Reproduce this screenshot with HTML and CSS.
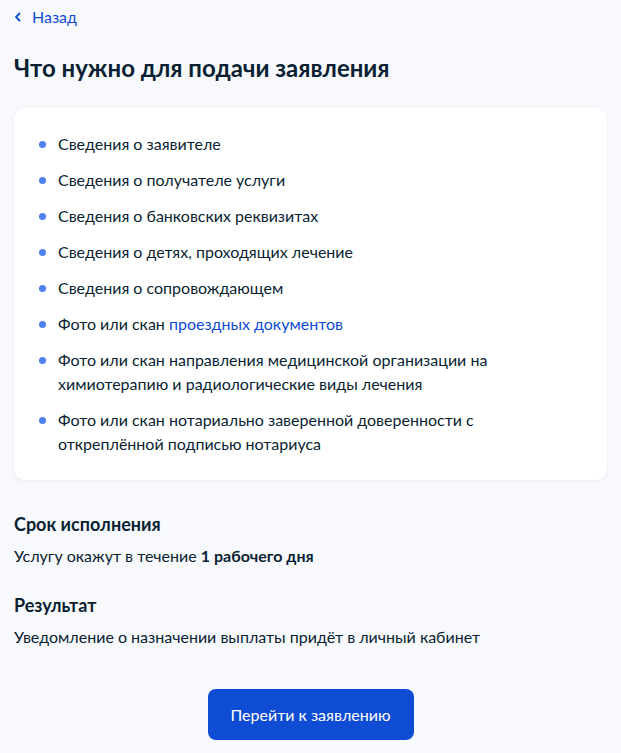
FILE: index.html
```html
<!DOCTYPE html>
<html lang="ru">
<head>
    <meta charset="UTF-8">
    <meta name="viewport" content="width=device-width, initial-scale=1.0">
    <title>Что нужно для подачи заявления</title>
    <link rel="stylesheet" href="styles.css">
</head>
<body>
    <div class="page">
        <a class="back-link" href="#">
            <svg class="back-icon" width="10" height="10" viewBox="0 0 10 10" aria-hidden="true">
                <path d="M6.5 1.5 L3 5 L6.5 8.5" fill="none" stroke="currentColor" stroke-width="1.8" stroke-linecap="round" stroke-linejoin="round"/>
            </svg>
            <span>Назад</span>
        </a>

        <h1 class="page-title">Что нужно для подачи заявления</h1>

        <div class="card">
            <ul class="doc-list">
                <li>Сведения о заявителе</li>
                <li>Сведения о получателе услуги</li>
                <li>Сведения о банковских реквизитах</li>
                <li>Сведения о детях, проходящих лечение</li>
                <li>Сведения о сопровождающем</li>
                <li>Фото или скан <a href="#">проездных документов</a></li>
                <li>Фото или скан направления медицинской организации на химиотерапию и радиологические виды лечения</li>
                <li>Фото или скан нотариально заверенной доверенности с откреплённой подписью нотариуса</li>
            </ul>
        </div>

        <section class="info-block">
            <h2 class="info-title">Срок исполнения</h2>
            <p class="info-text">Услугу окажут в течение <strong>1 рабочего дня</strong></p>
        </section>

        <section class="info-block">
            <h2 class="info-title">Результат</h2>
            <p class="info-text">Уведомление о назначении выплаты придёт в личный кабинет</p>
        </section>

        <div class="actions">
            <button class="primary-btn">Перейти к заявлению</button>
        </div>
    </div>
</body>
</html>
```

FILE: styles.css
```css
:root {
    --primary-color: #0d4cd3;
    --text-color: #0b1f33;
    --bullet-color: #4f7ff0;
}

body {
    font-family: Lato, "Open Sans", sans-serif;
    margin: 0;
    background: #f7f9fd;
    color: var(--text-color);
}

.page {
    padding: 6px 14px 0 14px;
}

.back-link {
    display: inline-flex;
    align-items: center;
    gap: 9px;
    color: var(--primary-color);
    text-decoration: none;
    font-size: 16px;
    line-height: 22px;
}

.back-icon {
    display: block;
    margin-left: -1px;
}

.page-title {
    font-size: 24px;
    font-weight: 700;
    line-height: 28px;
    margin: 26px 0 26px 0;
}

.card {
    background: white;
    border-radius: 12px;
    box-shadow: 0 1px 4px rgba(0, 40, 110, 0.06);
    padding: 24px;
}

.doc-list {
    list-style: none;
    margin: 0;
    padding: 0;
    display: flex;
    flex-direction: column;
    gap: 12px;
}

.doc-list li {
    position: relative;
    padding-left: 20px;
    padding-right: 60px;
    font-size: 16px;
    line-height: 24px;
}

.doc-list li::before {
    content: "";
    position: absolute;
    left: 1px;
    top: 9px;
    width: 7px;
    height: 7px;
    border-radius: 50%;
    background: var(--bullet-color);
}

.doc-list a {
    color: var(--primary-color);
    text-decoration: none;
}

.info-block {
    margin-top: 32px;
}

.info-block + .info-block {
    margin-top: 25px;
}

.info-title {
    font-size: 18px;
    font-weight: 700;
    line-height: 24px;
    margin: 0 0 8px 0;
}

.info-text {
    font-size: 16px;
    line-height: 24px;
    margin: 0;
}

.info-text strong {
    font-weight: 700;
}

.actions {
    display: flex;
    justify-content: center;
    margin-top: 40px;
}

.primary-btn {
    background: var(--primary-color);
    color: white;
    border: none;
    border-radius: 8px;
    font-family: Lato, sans-serif;
    font-size: 16px;
    width: 206px;
    height: 51px;
    cursor: pointer;
}
```
